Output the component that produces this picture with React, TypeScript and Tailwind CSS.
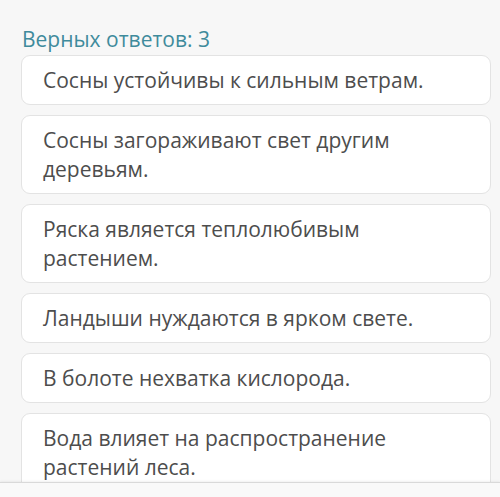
import React from "react";

const items = [
  "Сосны устойчивы к сильным ветрам.",
  "Сосны загораживают свет другим деревьям.",
  "Ряска является теплолюбивым растением.",
  "Ландыши нуждаются в ярком свете.",
  "В болоте нехватка кислорода.",
  "Вода влияет на распространение растений леса.",
];

export default function App() {
  return (
    <div
      className="relative w-[500px] h-[497px] overflow-hidden bg-[#f7f7f7]"
      style={{ fontFamily: '"Open Sans", "Noto Sans", sans-serif' }}
    >
      <div className="pt-[26px] pl-[21px] pr-[9px]">
        <div className="text-[21px] leading-[26px] text-[#3f8b9c] pl-[1px]">
          Верных ответов: 3
        </div>
        <div className="mt-[3px] flex flex-col gap-[10px]">
          {items.map((t) => (
            <div
              key={t}
              className="bg-white border border-[#e3e3e3] rounded-[9px] pl-[21px] pr-[40px] py-[9.5px] text-[21px] leading-[29px] text-[#4d4d4d]"
            >
              {t}
            </div>
          ))}
        </div>
      </div>
      <div className="absolute left-0 right-0 top-[482px] bottom-0 bg-[#f9f9f9] border-t border-[#d9d9d9] shadow-[0_-1px_2px_rgba(0,0,0,0.06)]" />
    </div>
  );
}
